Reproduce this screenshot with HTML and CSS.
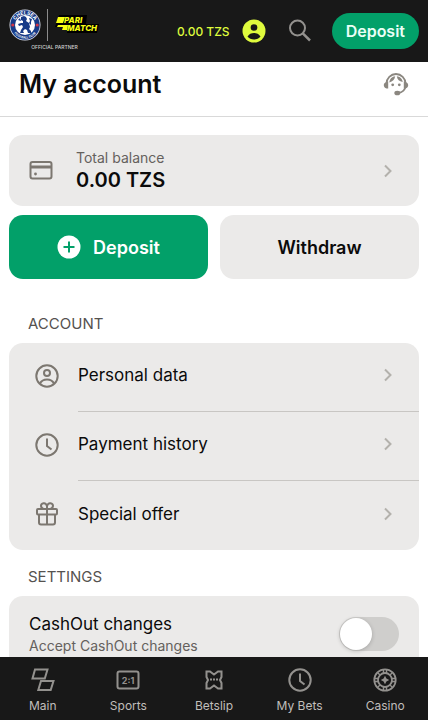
FILE: index.html
```html
<!DOCTYPE html>
<html lang="en">
<head>
    <meta charset="UTF-8">
    <meta name="viewport" content="width=device-width, initial-scale=1.0">
    <title>My account</title>
    <link rel="stylesheet" href="styles.css">
</head>
<body>
    <header class="topbar">
        <a href="#" class="brand" aria-label="Parimatch">
            <span class="brand-row">
                <svg width="32" height="32" viewBox="0 0 32 32">
                    <circle cx="16" cy="16" r="15.5" fill="#dfe3ee"/>
                    <circle cx="16" cy="16" r="14.7" fill="#173b88"/>
                    <circle cx="16" cy="16" r="10" fill="#fff"/>
                    <path id="ring" d="M5.5 16a10.5 10.5 0 0 1 21 0" fill="none"/>
                    <path id="ring-low" d="M2.5 16a13.5 13.5 0 0 0 27 0" fill="none"/>
                    <text class="crest-text"><textPath href="#ring" startOffset="50%">CHELSEA</textPath></text>
                    <text class="crest-text crest-small"><textPath href="#ring-low" startOffset="50%">FOOTBALL CLUB</textPath></text>
                    <circle cx="3.8" cy="16" r="1.6" fill="#d33545"/>
                    <circle cx="28.2" cy="16" r="1.6" fill="#d33545"/>
                    <path d="M12 8l3-1 2 1 1 2-1 2 3 2 1 4-1 2 2 2v2h-3l-1-3-2-1-2 2 1 2h-4l1-3 2-3-1-2-3 1-1-2 3-1 2 0 0-2-2-1zM20 14l1-2-1-3 3 1-1 3 0 3zM11 10v7M9 11l2-2 1 3z" fill="#173b88"/>
                </svg>
                <span class="brand-line"></span>
                <svg width="46" height="22" viewBox="0 0 46 22">
                    <path d="M5 1h28l-1 9h13l-2 9H13l1-6H1l2-6z" fill="#000"/>
                    <path d="M4 3h7l-2 6H2zM4 11h10l-1 5H8l1-3H3z" fill="#f8ff13"/>
                    <text x="10" y="9" class="logo-text">PARI</text>
                    <text x="13" y="17" class="logo-text">MATCH</text>
                </svg>
            </span>
            <span class="partner">OFFICIAL PARTNER</span>
        </a>
        <div class="top-actions">
            <a href="#" class="top-balance">
                <span>0.00 TZS</span>
                <svg width="24" height="24" viewBox="0 0 24 24">
                    <circle cx="12" cy="12" r="11.5" fill="#dffb3d"/>
                    <circle cx="12" cy="8.5" r="3.3" fill="#181818"/>
                    <path d="M5.5 17.6C7 14.9 9.4 14 12 14s5 .9 6.5 3.6C17 19.6 14.7 20.5 12 20.5s-5-.9-6.5-2.9z" fill="#181818"/>
                </svg>
            </a>
            <button class="search" aria-label="Search">
                <svg width="24" height="24" viewBox="0 0 24 24" fill="none" stroke="#93918e" stroke-width="2">
                    <circle cx="9.5" cy="9" r="7.5"/>
                    <path d="M14.8 14.3l7.2 7.2" stroke-width="2.5"/>
                </svg>
            </button>
            <button class="top-deposit">Deposit</button>
        </div>
    </header>

    <div class="page-title">
        <h1>My account</h1>
        <button class="support" aria-label="Support">
            <svg width="26" height="26" viewBox="0 0 26 26">
                <path d="M3.5 12.500a9.500 9.500 0 0 1 19 0v2c0 4-3 7-7.500 7.500" fill="none" stroke="#8b8780" stroke-width="1.800"/>
                <path d="M5.200 10.500v7H3.500C1.800 17 .8 15.800.8 14.200s1-2.700 2.700-3.200zM20.800 10.500v7h1.700c1.700-.5 2.700-1.700 2.700-3.300s-1-2.700-2.700-3.200z" fill="#8b8780"/>
                <path d="M6.300 11.500C6.700 8 9 5.500 12.200 5.300c-.5 3.200-2.500 5.200-5.900 6.200zM13.800 5.300c3 .2 5.500 2.500 5.900 5.700-3.300-.4-5.500-2.300-5.900-5.700z" fill="#8b8780"/>
                <circle cx="9.700" cy="13.800" r="1.400" fill="#8b8780"/>
                <circle cx="16.300" cy="13.800" r="1.400" fill="#8b8780"/>
                <ellipse cx="14.300" cy="22" rx="3" ry="2.300" fill="#8b8780"/>
            </svg>
        </button>
    </div>

    <main class="content">
        <a href="#" class="card balance">
            <svg width="24" height="24" viewBox="0 0 24 24" fill="none" stroke="#7c7770" stroke-width="2">
                <rect x="1.500" y="3" width="21" height="16.500" rx="2"/>
                <path d="M1.500 8h21" stroke-width="3"/>
                <circle cx="6.500" cy="15" r="1.400" fill="#7c7770" stroke="none"/>
            </svg>
            <span class="balance-text">
                <span class="muted">Total balance</span>
                <strong>0.00 TZS</strong>
            </span>
            <svg class="chevron" width="10" height="14" viewBox="0 0 10 14"><path d="M2 1.5L7.5 7 2 12.5"/></svg>
        </a>

        <div class="actions">
            <button class="btn btn-green">
                <svg width="24" height="24" viewBox="0 0 24 24">
                    <circle cx="12" cy="12" r="11.5" fill="#fff"/>
                    <path d="M12 6.500v11M6.500 12h11" stroke="#02a069" stroke-width="2"/>
                </svg>
                Deposit
            </button>
            <button class="btn">Withdraw</button>
        </div>

        <h2>ACCOUNT</h2>
        <nav class="card list">
            <a href="#" class="list-item">
                <svg width="24" height="24" viewBox="0 0 24 24" fill="none" stroke="#7c7770" stroke-width="2">
                    <circle cx="12" cy="12" r="10.7"/>
                    <circle cx="12" cy="9" r="3"/>
                    <path d="M5 19.500c1.500-3 4-4 7-4s5.500 1 7 4"/>
                </svg>
                <span class="list-label">Personal data
                    <svg class="chevron" width="10" height="14" viewBox="0 0 10 14"><path d="M2 1.5L7.5 7 2 12.5"/></svg>
                </span>
            </a>
            <a href="#" class="list-item">
                <svg width="24" height="24" viewBox="0 0 24 24" fill="none" stroke="#7c7770" stroke-width="2">
                    <circle cx="12" cy="12" r="10.7"/>
                    <path d="M12 5.500V13l4.500 3.500"/>
                </svg>
                <span class="list-label">Payment history
                    <svg class="chevron" width="10" height="14" viewBox="0 0 10 14"><path d="M2 1.5L7.5 7 2 12.5"/></svg>
                </span>
            </a>
            <a href="#" class="list-item">
                <svg width="24" height="24" viewBox="0 0 24 24" fill="none" stroke="#7c7770" stroke-width="2" stroke-linejoin="round">
                    <rect x="2" y="7" width="20" height="5.500" rx="1"/>
                    <path d="M4 12.500v8q0 2 2 2h12q2 0 2-2v-8M12 7v15.500"/>
                    <path d="M12 7H8.500Q6 6 6 3.800T8.500 1.200 12 4zM12 7h3.500Q18 6 18 3.800t-2.500-2.600T12 4z"/>
                </svg>
                <span class="list-label">Special offer
                    <svg class="chevron" width="10" height="14" viewBox="0 0 10 14"><path d="M2 1.5L7.5 7 2 12.5"/></svg>
                </span>
            </a>
        </nav>

        <h2>SETTINGS</h2>
        <label class="card setting" for="cashout">
            <span class="setting-text">
                <span class="setting-name">CashOut changes</span>
                <span class="muted">Accept CashOut changes</span>
            </span>
            <input type="checkbox" class="switch" id="cashout">
        </label>
    </main>

    <nav class="tabbar">
        <a href="#">
            <svg width="24" height="24" viewBox="0 0 24 24" fill="none" stroke="#93918e" stroke-width="2">
                <path d="M4 1.500h12.500L13.800 10.500H1.500zM10 13h12.500L19.700 22H7.300z"/>
            </svg>
            Main
        </a>
        <a href="#">
            <svg width="24" height="24" viewBox="0 0 24 24">
                <rect x="1.500" y="3.500" width="21" height="17" rx="2" fill="none" stroke="#93918e" stroke-width="2"/>
                <text x="12" y="15.500" class="score">2:1</text>
            </svg>
            Sports
        </a>
        <a href="#">
            <svg width="24" height="24" viewBox="0 0 24 24" fill="none" stroke="#93918e" stroke-width="2">
                <path d="M4.500 3.500H8l4 3 4-3h3.500V9L18 12l1.500 3v5.500H16l-4-3-4 3H4.500V15L6 12 4.500 9z"/>
                <path d="M8 11.500h2M11 11.500h2M14 11.500h2"/>
            </svg>
            Betslip
        </a>
        <a href="#">
            <svg width="24" height="24" viewBox="0 0 24 24" fill="none" stroke="#93918e" stroke-width="2">
                <circle cx="12" cy="12" r="10.7"/>
                <path d="M12 5.500V13l4.500 3.500"/>
            </svg>
            My Bets
        </a>
        <a href="#">
            <svg width="24" height="24" viewBox="0 0 24 24" fill="none" stroke="#93918e" stroke-width="1.800">
                <circle cx="12" cy="12" r="10.7"/>
                <circle cx="12" cy="12" r="7"/>
                <path d="M10.500 1v4M13.500 1v4M10.500 19v4M13.500 19v4M1 10.500h4M1 13.500h4M19 10.500h4M19 13.500h4M4.500 4.500L7 7M17 17l2.500 2.500M4.500 19.500L7 17M17 7l2.500-2.500" stroke-width="1.400"/>
                <path d="M12 7.800l1.400 2.800 2.800 1.400-2.800 1.400-1.400 2.800-1.400-2.800L7.800 12l2.800-1.400z" fill="#93918e" stroke="none"/>
            </svg>
            Casino
        </a>
    </nav>
</body>
</html>
```
FILE: styles.css
```css
* {
    box-sizing: border-box;
}
body {
    display: flex;
    flex-direction: column;
    height: 100vh;
    margin: 0;
    font-family: Inter, sans-serif;
    background: #fff;
    color: #0b0b0b;
}
a {
    color: inherit;
    text-decoration: none;
}
button {
    padding: 0;
    border: none;
    background: none;
    color: inherit;
    font-family: inherit;
    cursor: pointer;
}
svg {
    display: block;
    flex-shrink: 0;
}

/* top bar */
.topbar {
    display: flex;
    flex-shrink: 0;
    justify-content: space-between;
    align-items: center;
    height: 62px;
    padding: 0 9px;
    background: #181818;
}
.brand {
    display: flex;
    flex-direction: column;
    align-items: center;
    color: #d0d0d0;
}
.brand-row {
    display: flex;
    align-items: center;
    gap: 6px;
}
.brand-line {
    width: 1px;
    height: 32px;
    background: #8c8c8c;
}
.partner {
    font-size: 5px;
    line-height: 12px;
    font-weight: 500;
}
.crest-text {
    font-size: 5px;
    font-weight: 700;
    fill: #fff;
    text-anchor: middle;
}
.crest-small {
    font-size: 3px;
}
.logo-text {
    font-size: 8px;
    line-height: 8px;
    font-weight: 800;
    font-style: italic;
    fill: #f8ff13;
}
.top-actions {
    display: flex;
    align-items: center;
}
.top-balance {
    display: flex;
    align-items: center;
    gap: 12px;
    color: #dffb3d;
    font-size: 12px;
    font-weight: 500;
}
.search {
    margin: 0 20px 0 22px;
}
.top-deposit {
    height: 36px;
    padding: 0 14px;
    border-radius: 18px;
    background: #02a069;
    color: #e9fff6;
    font-size: 16px;
    font-weight: 600;
}

/* title */
.page-title {
    display: flex;
    flex-shrink: 0;
    justify-content: space-between;
    align-items: center;
    padding: 0 19px 10px;
    height: 55px;
    border-bottom: 1px solid #d9d9d9;
}
.page-title h1 {
    margin: 0;
    font-size: 25px;
    line-height: 32px;
    font-weight: 600;
}

/* content */
.content {
    flex: 1;
    min-height: 0;
    overflow: hidden;
    padding: 18px 9px 0;
}
.card {
    border-radius: 14px;
    background: #ebeae9;
}
.muted {
    font-size: 14px;
    line-height: 20px;
    color: #65615d;
}
.chevron {
    fill: none;
    stroke: #b3b1ac;
    stroke-width: 2;
}
.balance {
    display: flex;
    align-items: center;
    height: 71px;
    padding: 0 26px 0 20px;
}
.balance-text {
    display: flex;
    flex: 1;
    flex-direction: column;
    margin-left: 23px;
    padding-bottom: 2px;
}
.balance-text strong {
    font-size: 20px;
    line-height: 24px;
    font-weight: 600;
}
.actions {
    display: flex;
    gap: 12px;
    margin-top: 9px;
}
.btn {
    display: flex;
    flex: 1;
    justify-content: center;
    align-items: center;
    gap: 12px;
    height: 64px;
    border-radius: 14px;
    background: #ebeae9;
    font-size: 18px;
    font-weight: 600;
}
.btn-green {
    background: #02a069;
    color: #fff;
}
h2 {
    margin: 0;
    padding: 17px 19px 9px;
    font-size: 15px;
    line-height: 20px;
    font-weight: 400;
    color: #55524f;
}
.actions + h2 {
    margin-top: 18px;
}
.list-item {
    display: flex;
    align-items: center;
    height: 69px;
    padding-left: 26px;
}
.list-item > svg {
    margin-bottom: 4px;
}
.list-label {
    display: flex;
    flex: 1;
    justify-content: space-between;
    align-items: center;
    height: 69px;
    margin-left: 19px;
    padding: 0 26px 4px 0;
    border-bottom: 1px solid #c8c6c3;
    font-size: 17px;
}
.list-item:last-child .list-label {
    border-bottom: none;
}
.setting {
    display: flex;
    justify-content: space-between;
    align-items: center;
    height: 75px;
    padding: 0 20px;
}
.setting-text {
    display: flex;
    flex-direction: column;
}
.setting-name {
    font-size: 17px;
    line-height: 24px;
}
.switch {
    appearance: none;
    width: 60px;
    height: 34px;
    margin: 0;
    padding: 1px;
    border-radius: 17px;
    background: #cfcecc;
}
.switch::before {
    content: "";
    display: block;
    width: 32px;
    height: 32px;
    border-radius: 50%;
    background: #fff;
    box-shadow: 0 1px 4px rgba(0, 0, 0, 0.2);
}
.switch:checked {
    background: #02a069;
}
.switch:checked::before {
    margin-left: auto;
}

/* bottom tabs */
.tabbar {
    display: flex;
    flex-shrink: 0;
    height: 63px;
    background: #181818;
}
.tabbar a {
    display: flex;
    flex: 1;
    flex-direction: column;
    align-items: center;
    gap: 6px;
    padding-top: 11px;
    color: #c0bebb;
    font-size: 12px;
    line-height: 16px;
}
.score {
    font-size: 9px;
    font-weight: 700;
    text-anchor: middle;
    fill: #93918e;
}
```
